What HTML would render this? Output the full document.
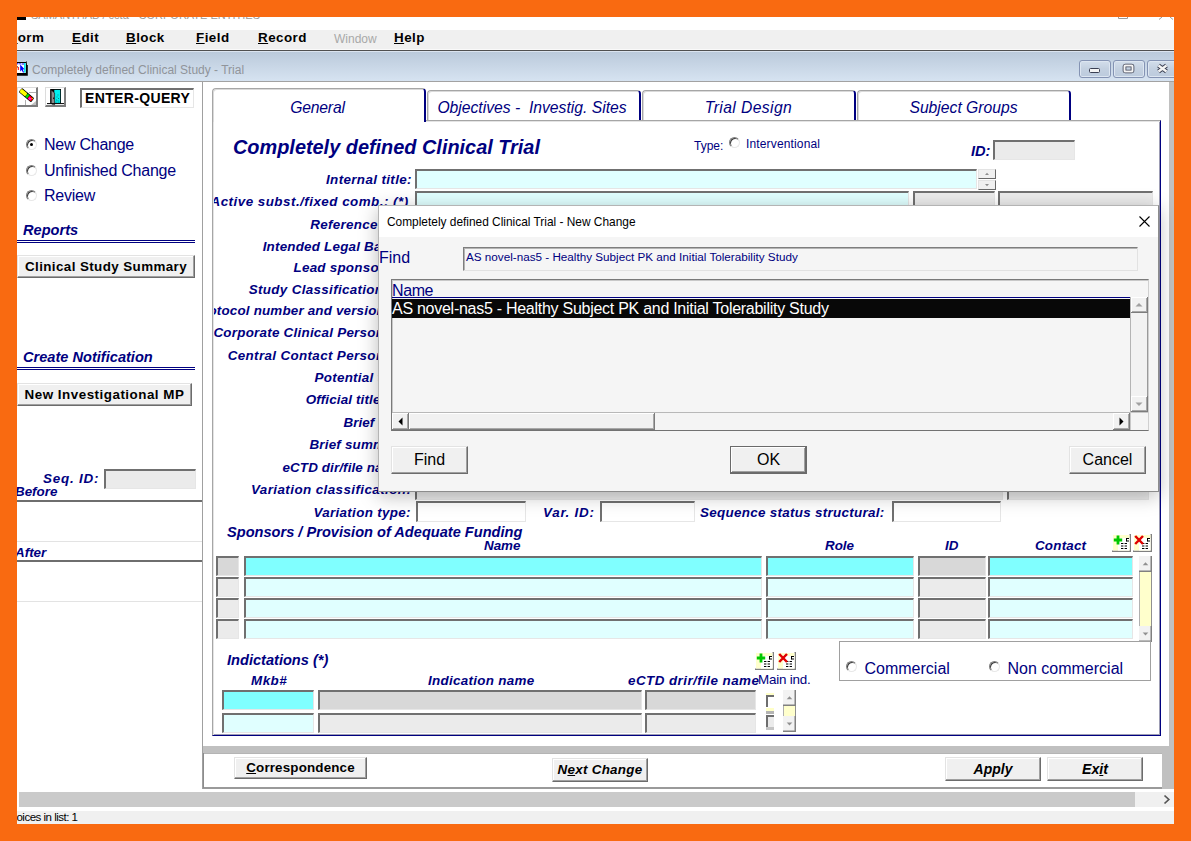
<!DOCTYPE html>
<html><head><meta charset="utf-8"><title>Completely defined Clinical Study - Trial</title>
<style>
*{box-sizing:border-box;margin:0;padding:0}
html,body{width:1191px;height:841px;overflow:hidden;background:#f96a11;font-family:"Liberation Sans",sans-serif}
#win{position:absolute;left:0;top:0;width:1191px;height:841px;background:#fff;overflow:hidden}
.fr{position:absolute;background:#f96a11;z-index:50}
.a{position:absolute;white-space:nowrap}
.nv{color:#000080}
.bi{font-weight:bold;font-style:italic;color:#000080;font-size:13.4px;line-height:16px}
.lbl{position:absolute;white-space:nowrap;font-weight:bold;font-style:italic;color:#000080;font-size:13.4px;text-align:right;line-height:16px;letter-spacing:.15px}
.f{position:absolute;border-style:solid;border-width:2px 1px 1px 2px;border-color:#707070 #e6e6e6 #e6e6e6 #707070}
.cy{background:#e0ffff}.cy1{background:#80ffff}.g{background:#ebebeb}.g1{background:#d8d8d8}.w{background:#fff}
.btn{position:absolute;background:#f0f0f0;border-style:solid;border-width:1px;border-color:#e3e3e3 #6c6c6c #6c6c6c #e3e3e3;box-shadow:inset -1px -1px 0 #a0a0a0,inset 1px 1px 0 #fff;text-align:center;white-space:nowrap;color:#000}
.u{text-decoration:underline}
.mn{font-weight:bold;font-size:13.4px;letter-spacing:.45px;line-height:16px;color:#000}
.rad{position:absolute;width:11px;height:11px;border-radius:50%;background:#fff;border:1px solid;border-color:#808080 #e8e8e8 #e8e8e8 #808080;box-shadow:inset 1px 1px 0 #404040}
.rad.on:after{content:"";position:absolute;left:3px;top:3px;width:3px;height:3px;border-radius:50%;background:#000}
.rl{position:absolute;white-space:nowrap;color:#000080;font-size:16px;line-height:20px;letter-spacing:-.25px}
.tab{position:absolute;background:#fff;border-style:solid;border-color:#a6a6a6 #000080 #a6a6a6 #a6a6a6;border-width:1px 2px 0 1px;box-shadow:inset 1px 1px 0 #dadada;border-radius:4px 4px 0 0;text-align:center;font-style:italic;color:#000080;font-size:15.7px}
</style></head><body>
<div id="win">
<div class="a" style="left:17px;top:17px;width:1157px;height:13px;background:#fff;overflow:hidden"><div class="a" style="left:14px;top:-8px;font-size:11px;color:#9a9a9a">SAMANTHAB / ccta - CORPORATE ENTITIES</div><div class="a" style="left:0;top:0;width:9px;height:3px;background:#000"></div></div>
<div class="a" style="left:17px;top:30px;width:1157px;height:20px;background:#f0f0f0;"></div>
<div class="a" style="left:17px;top:49px;width:1157px;height:1px;background:#fafafa;"></div>
<div class="a" style="left:17px;top:50px;width:1157px;height:1px;background:#505050;"></div>
<div class="a mn" style="left:9px;top:30px;"><span class="u">F</span>orm</div>
<div class="a mn" style="left:72px;top:30px;"><span class="u">E</span>dit</div>
<div class="a mn" style="left:126px;top:30px;"><span class="u">B</span>lock</div>
<div class="a mn" style="left:196px;top:30px;"><span class="u">F</span>ield</div>
<div class="a mn" style="left:258px;top:30px;"><span class="u">R</span>ecord</div>
<div class="a mn" style="left:394px;top:30px;"><span class="u">H</span>elp</div>
<div class="a " style="left:334px;top:31px;font-size:12px;color:#a8a8a8;line-height:16px">Window</div>
<div class="a" style="left:17px;top:51px;width:1157px;height:30px;background:linear-gradient(#dbe4ef 0,#dbe4ef 1px,#bbcadb 1px,#d6e3f1 100%);"></div>
<div class="a" style="left:17px;top:81px;width:1157px;height:1px;background:#a2a2a2;"></div>
<div class="a " style="left:32px;top:62px;font-size:12px;color:#90949a;line-height:16px">Completely defined Clinical Study - Trial</div>
<div class="a" style="left:1079px;top:60px;width:32px;height:18px;background:linear-gradient(#d3deeb,#c3d0e0 50%,#bccbdd);border:1px solid #8493b3;border-radius:3px;box-shadow:inset 0 0 0 1px #dde6f1"></div>
<div class="a" style="left:1113px;top:60px;width:32px;height:18px;background:linear-gradient(#d3deeb,#c3d0e0 50%,#bccbdd);border:1px solid #8493b3;border-radius:3px;box-shadow:inset 0 0 0 1px #dde6f1"></div>
<div class="a" style="left:1147px;top:60px;width:33px;height:18px;background:linear-gradient(#d3deeb,#c3d0e0 50%,#bccbdd);border:1px solid #8493b3;border-radius:3px;box-shadow:inset 0 0 0 1px #dde6f1"></div>
<svg class="a" style="left:1079px;top:60px" width="95" height="18" viewBox="0 0 95 18"><rect x="10.5" y="8.5" width="10" height="4" rx="1" fill="#f4f4f4" stroke="#3a3f52"/><rect x="45.5" y="5.5" width="8" height="6" rx="1" fill="none" stroke="#3a3f52" stroke-width="3.6"/><rect x="45.5" y="5.5" width="8" height="6" rx="0.5" fill="none" stroke="#f4f4f4" stroke-width="2"/><path d="M79.5 5.5 L87.5 11.5 M87.5 5.5 L79.5 11.5" stroke="#3a3f52" stroke-width="4.4" fill="none"/><path d="M79.5 5.5 L87.5 11.5 M87.5 5.5 L79.5 11.5" stroke="#f4f4f4" stroke-width="2.4" fill="none"/></svg>
<svg class="a" style="left:17px;top:61px" width="12" height="16" viewBox="0 0 12 16"><path d="M0 0.9 H8.8 L9.6 0 L10 4 H10.8 V14.8 H0 Z" fill="#000"/><rect x="0" y="2" width="8.8" height="10" fill="#fff"/><rect x="7" y="2" width="1.6" height="9.6" fill="#00f0f0"/><path d="M0 2.8 h1.4 M2.2 2.8 h1.6 M4.6 3 h2.4" stroke="#0000ff" stroke-width="1"/><path d="M3.2 3.6 L3.2 10.4 L4.7 9 L6 11.8 L7 11.2 L5.8 8.6 L7.6 8.3 Z" fill="#0000ff"/><rect x="0.8" y="6" width="1" height="3" fill="#ff0000"/><rect x="0" y="5.4" width="0.9" height="1" fill="#000"/></svg>
<svg class="a" style="left:1110px;top:17px" width="64" height="6" viewBox="0 0 64 6"><path d="M8.5 0 V1.5 H17.5 V0" fill="none" stroke="#9a9a9a"/><path d="M49 2.5 L52 0 M60 0 L63 2.5" stroke="#9a9a9a" fill="none"/></svg>
<div class="a" style="left:202px;top:82px;width:1px;height:707px;background:#a0a0a0;"></div>
<div class="a" style="left:17px;top:87px;width:21px;height:20px;background:#fff;border-style:solid;border-color:#dcdcdc #7c7c7c #7c7c7c #dcdcdc;border-width:1px 2px 2px 1px"></div>
<div class="a" style="left:45px;top:87px;width:21px;height:20px;background:#fff;border-style:solid;border-color:#dcdcdc #7c7c7c #7c7c7c #dcdcdc;border-width:1px 2px 2px 1px"></div>
<svg class="a" style="left:17px;top:86px" width="21" height="21" viewBox="0 0 21 21"><path d="M12 6.5 H19 M8.5 14 V19" stroke="#b0b0b0" fill="none"/><path d="M19 15 V19 H14 Z" fill="#c0c0c0"/><g transform="translate(4.6,5) rotate(40)"><rect x="-1.6" y="-2.7" width="16" height="5.4" rx="1.2" fill="#000"/><rect x="-1.4" y="-1.9" width="7.6" height="3.9" rx="1.2" fill="#ffff00"/><rect x="6.4" y="-1.9" width="2.6" height="3.9" fill="#00e000"/><rect x="9.2" y="-1.9" width="4.6" height="3.9" rx="0.8" fill="#ff0000"/><rect x="10" y="-0.4" width="2.4" height="2.2" fill="#ff00ff"/><rect x="12.4" y="-1.6" width="1" height="1.2" fill="#ffff00"/></g></svg>
<svg class="a" style="left:45px;top:86px" width="21" height="21" viewBox="0 0 21 21"><rect x="5.2" y="3" width="10.8" height="14.5" fill="#000"/><rect x="9.3" y="3.9" width="5.9" height="13" fill="#00f0f0"/><path d="M6.2 4 L9.6 7 V19 L7.3 18.4 L6.2 17.5 Z" fill="#8c8c8c" stroke="#000" stroke-width=".5"/><path d="M2 17.6 H19" stroke="#000" stroke-width="1"/><path d="M12.5 9 h1 M11.5 11 h1 M13 12.5 h1 M11 14 h1 M12.5 14.8 h1 M10.5 16 h1 M13.3 16 h1" stroke="#008c8c" stroke-width="1"/><rect x="8.2" y="11.5" width="1" height="1.6" fill="#000"/></svg>
<div class="f w" style="left:80px;top:88px;width:114px;height:20px;font-weight:bold;font-size:14px;line-height:16px;letter-spacing:.35px;color:#000;padding-left:3px">ENTER-QUERY</div>
<div class="rad on" style="left:26px;top:139px"></div>
<div class="rl" style="left:44px;top:135px">New Change</div>
<div class="rad" style="left:26px;top:165px"></div>
<div class="rl" style="left:44px;top:161px">Unfinished Change</div>
<div class="rad" style="left:26px;top:190px"></div>
<div class="rl" style="left:44px;top:186px">Review</div>
<div class="a bi" style="left:23px;top:222px;font-size:14.6px">Reports</div>
<div class="a" style="left:17px;top:240px;width:178px;height:1px;background:#000080;"></div>
<div class="a" style="left:17px;top:242px;width:178px;height:1px;background:#000080;"></div>
<div class="btn" style="left:17px;top:255px;width:178px;height:23px;line-height:21px;font-weight:bold;font-size:13.4px;letter-spacing:.4px">Clinical Study Summary</div>
<div class="a bi" style="left:23px;top:349px;font-size:14.6px">Create Notification</div>
<div class="a" style="left:17px;top:367px;width:178px;height:1px;background:#000080;"></div>
<div class="a" style="left:17px;top:369px;width:178px;height:1px;background:#000080;"></div>
<div class="btn" style="left:17px;top:383px;width:175px;height:23px;line-height:21px;font-weight:bold;font-size:13.4px;letter-spacing:.5px">New Investigational MP</div>
<div class="a bi" style="left:43px;top:471px;letter-spacing:.8px">Seq. ID:</div>
<div class="f g" style="left:104px;top:469px;width:92px;height:20px"></div>
<div class="a bi" style="left:15px;top:484px;">Before</div>
<div class="a" style="left:17px;top:500px;width:185px;height:2px;background:#6e6e6e;"></div>
<div class="a" style="left:17px;top:541px;width:185px;height:1px;background:#e3e3e3;"></div>
<div class="a bi" style="left:15px;top:545px;">After</div>
<div class="a" style="left:17px;top:560px;width:185px;height:2px;background:#6e6e6e;"></div>
<div class="a" style="left:17px;top:601px;width:185px;height:1px;background:#e3e3e3;"></div>
<div class="a" style="left:212px;top:120px;width:949px;height:616px;border-style:solid;border-width:1px;border-color:#a6a6a6 #000080 #000080 #a6a6a6;box-shadow:inset 1px 1px 0 #e4e4e4,inset -1px -1px 0 #9c9cb4;background:#fff"></div>
<div class="tab" style="left:427px;top:90px;width:214px;height:30px;line-height:33px;padding-right:3px">Objectives -&nbsp; Investig. Sites</div>
<div class="tab" style="left:642px;top:90px;width:214px;height:30px;line-height:33px;letter-spacing:.4px">Trial Design</div>
<div class="tab" style="left:857px;top:90px;width:214px;height:30px;line-height:33px;">Subject Groups</div>
<div class="tab" style="left:212px;top:88px;width:214px;height:34px;line-height:38px;letter-spacing:-.2px;padding-right:2px">General</div>
<div class="a bi" style="left:233px;top:135.20000000000002px;font-size:19.9px;line-height:24px">Completely defined Clinical Trial</div>
<div class="a nv" style="left:694px;top:138px;font-size:12px;line-height:16px">Type:</div>
<div class="rad" style="left:729px;top:137px"></div>
<div class="a nv" style="left:746px;top:136px;font-size:12px;line-height:16px;letter-spacing:.15px">Interventional</div>
<div class="a bi" style="left:971px;top:142.8px;font-size:14.6px">ID:</div>
<div class="f g" style="left:993px;top:140px;width:82px;height:20px"></div>
<div class="a" style="left:214px;top:160px;width:200px;height:370px;overflow:hidden">
<div class="lbl" style="left:112px;top:12px;letter-spacing:0.37px">Internal title:</div>
<div class="lbl" style="left:-3.5px;top:34px;letter-spacing:0.48px">Active subst./fixed comb.: (*)</div>
<div class="lbl" style="left:96.30000000000001px;top:57px;letter-spacing:0.3px">Reference no.:</div>
<div class="lbl" style="left:48.69999999999999px;top:79px;letter-spacing:0.21px">Intended Legal Basis:</div>
<div class="lbl" style="left:79.5px;top:100px;letter-spacing:0.25px">Lead sponsor:</div>
<div class="lbl" style="left:34.80000000000001px;top:122px;letter-spacing:0.33px">Study Classification:</div>
<div class="lbl" style="left:-20px;top:143px;letter-spacing:0.18px">Protocol number and version:</div>
<div class="lbl" style="left:-0.5999999999999943px;top:165px;letter-spacing:0.25px">Corporate Clinical Person:</div>
<div class="lbl" style="left:13.699999999999989px;top:188px;letter-spacing:0.36px">Central Contact Person:</div>
<div class="lbl" style="left:100.5px;top:210px;letter-spacing:0.28px">Potential title:</div>
<div class="lbl" style="left:91.80000000000001px;top:232px;letter-spacing:0.15px">Official title:</div>
<div class="lbl" style="left:129.5px;top:255px;letter-spacing:0.02px">Brief title:</div>
<div class="lbl" style="left:95.5px;top:277px;letter-spacing:0.2px">Brief summary:</div>
<div class="lbl" style="left:68.5px;top:300px;letter-spacing:0.12px">eCTD dir/file name:</div>
<div class="lbl" style="left:37px;top:322px;letter-spacing:0.42px">Variation classification:</div>
<div class="lbl" style="left:99.39999999999998px;top:345px;letter-spacing:0.33px">Variation type:</div>
</div>
<div class="f cy" style="left:415px;top:169px;width:562px;height:20px"></div>
<div class="a" style="left:978px;top:169px;width:18px;height:10px;background:#f0f0f0;border:1px solid;border-color:#e3e3e3 #696969 #696969 #e3e3e3"></div>
<div class="a" style="left:978px;top:180px;width:18px;height:10px;background:#f0f0f0;border:1px solid;border-color:#e3e3e3 #696969 #696969 #e3e3e3"></div>
<svg class="a" style="left:978px;top:169px" width="18" height="21" viewBox="0 0 18 21"><path d="M7 6 L9 3.8 L11 6 Z M7 15 L9 17.2 L11 15 Z" fill="#909090"/></svg>
<div class="f cy" style="left:415px;top:191px;width:494px;height:20px"></div>
<div class="f g" style="left:913px;top:191px;width:82px;height:20px"></div>
<div class="f g" style="left:998px;top:191px;width:155px;height:20px"></div>
<div class="f g" style="left:415px;top:480px;width:588px;height:20px"></div>
<div class="f g" style="left:1007px;top:480px;width:142px;height:20px"></div>
<div class="f w" style="left:416px;top:501px;width:110px;height:21px"></div>
<div class="a bi" style="left:543px;top:504.8px;letter-spacing:.75px">Var. ID:</div>
<div class="f w" style="left:600px;top:501px;width:95px;height:21px"></div>
<div class="a bi" style="left:700px;top:504.8px;letter-spacing:.3px">Sequence status structural:</div>
<div class="f w" style="left:892px;top:501px;width:109px;height:21px"></div>
<div class="a bi" style="left:227px;top:523.8px;font-size:14.6px">Sponsors / Provision of Adequate Funding</div>
<div class="a bi" style="left:484px;top:537.8px;">Name</div>
<div class="a bi" style="left:825px;top:537.8px;">Role</div>
<div class="a bi" style="left:945px;top:537.8px;">ID</div>
<div class="a bi" style="left:1035px;top:537.8px;letter-spacing:.2px">Contact</div>
<div class="f g1" style="left:216px;top:556px;width:23px;height:20px"></div>
<div class="f cy1" style="left:244px;top:556px;width:518px;height:20px"></div>
<div class="f cy1" style="left:766px;top:556px;width:148px;height:20px"></div>
<div class="f g1" style="left:918px;top:556px;width:68px;height:20px"></div>
<div class="f cy1" style="left:988px;top:556px;width:145px;height:20px"></div>
<div class="f g" style="left:216px;top:577px;width:23px;height:20px"></div>
<div class="f cy" style="left:244px;top:577px;width:518px;height:20px"></div>
<div class="f cy" style="left:766px;top:577px;width:148px;height:20px"></div>
<div class="f g" style="left:918px;top:577px;width:68px;height:20px"></div>
<div class="f cy" style="left:988px;top:577px;width:145px;height:20px"></div>
<div class="f g" style="left:216px;top:598px;width:23px;height:20px"></div>
<div class="f cy" style="left:244px;top:598px;width:518px;height:20px"></div>
<div class="f cy" style="left:766px;top:598px;width:148px;height:20px"></div>
<div class="f g" style="left:918px;top:598px;width:68px;height:20px"></div>
<div class="f cy" style="left:988px;top:598px;width:145px;height:20px"></div>
<div class="f g" style="left:216px;top:619px;width:23px;height:20px"></div>
<div class="f cy" style="left:244px;top:619px;width:518px;height:20px"></div>
<div class="f cy" style="left:766px;top:619px;width:148px;height:20px"></div>
<div class="f g" style="left:918px;top:619px;width:68px;height:20px"></div>
<div class="f cy" style="left:988px;top:619px;width:145px;height:20px"></div>
<div class="a" style="left:1139px;top:556px;width:13px;height:86px;background:#ffffcc;border-left:1px solid #b0b0b0;border-right:1px solid #909090"></div>
<svg class="a" style="left:1139px;top:556px" width="13" height="16" viewBox="0 0 13 16"><rect width="13" height="16" fill="#808080"/><rect width="11.5" height="14.5" fill="#f2f2f2"/><path d="M3.2 7.8 L6 4.8 L8.8 7.8 Z" fill="#909090" transform="translate(0.5,1.5)"/></svg>
<svg class="a" style="left:1139px;top:626px" width="13" height="16" viewBox="0 0 13 16"><rect width="13" height="16" fill="#808080"/><rect width="11.5" height="14.5" fill="#f2f2f2"/><path d="M3.2 5 L6 8 L8.8 5 Z" fill="#909090" transform="translate(0.5,1.5)"/></svg>
<svg class="a" style="left:1112px;top:534px" width="19" height="18" viewBox="0 0 19 18"><rect x="0" y="0" width="19" height="18" fill="#808080"/><rect x="0" y="0" width="17.5" height="16.5" fill="#fff"/><rect x="1" y="1" width="16.5" height="15.5" fill="#ffffcc"/><rect x="6" y="4" width="11.5" height="12.5" fill="#fff"/><path d="M9 9.5 H16 M9 12 H16 M9 14.5 H16" stroke="#000" stroke-width="1.2" stroke-dasharray="2.4 1.2" fill="none"/><path d="M14.5 4 V7.5 M14.5 4.5 H17 M14.5 7 H17" stroke="#000" stroke-width="1" fill="none"/><path d="M6 1.5 V10.5 M1.8 6 H10.2" stroke="#00c800" stroke-width="2.8" fill="none"/></svg>
<svg class="a" style="left:1133px;top:534px" width="19" height="18" viewBox="0 0 19 18"><rect x="0" y="0" width="19" height="18" fill="#808080"/><rect x="0" y="0" width="17.5" height="16.5" fill="#fff"/><rect x="1" y="1" width="16.5" height="15.5" fill="#ffffcc"/><rect x="6" y="4" width="11.5" height="12.5" fill="#fff"/><path d="M9 9.5 H16 M9 12 H16 M9 14.5 H16" stroke="#000" stroke-width="1.2" stroke-dasharray="2.4 1.2" fill="none"/><path d="M14.5 4 V7.5 M14.5 4.5 H17 M14.5 7 H17" stroke="#000" stroke-width="1" fill="none"/><path d="M2.2 2 L10 10 M10 2 L2.2 10" stroke="#e00000" stroke-width="2.5" fill="none"/></svg>
<svg class="a" style="left:755px;top:652px" width="19" height="18" viewBox="0 0 19 18"><rect x="0" y="0" width="19" height="18" fill="#808080"/><rect x="0" y="0" width="17.5" height="16.5" fill="#fff"/><rect x="1" y="1" width="16.5" height="15.5" fill="#ffffcc"/><rect x="6" y="4" width="11.5" height="12.5" fill="#fff"/><path d="M9 9.5 H16 M9 12 H16 M9 14.5 H16" stroke="#000" stroke-width="1.2" stroke-dasharray="2.4 1.2" fill="none"/><path d="M14.5 4 V7.5 M14.5 4.5 H17 M14.5 7 H17" stroke="#000" stroke-width="1" fill="none"/><path d="M6 1.5 V10.5 M1.8 6 H10.2" stroke="#00c800" stroke-width="2.8" fill="none"/></svg>
<svg class="a" style="left:777px;top:652px" width="19" height="18" viewBox="0 0 19 18"><rect x="0" y="0" width="19" height="18" fill="#808080"/><rect x="0" y="0" width="17.5" height="16.5" fill="#fff"/><rect x="1" y="1" width="16.5" height="15.5" fill="#ffffcc"/><rect x="6" y="4" width="11.5" height="12.5" fill="#fff"/><path d="M9 9.5 H16 M9 12 H16 M9 14.5 H16" stroke="#000" stroke-width="1.2" stroke-dasharray="2.4 1.2" fill="none"/><path d="M14.5 4 V7.5 M14.5 4.5 H17 M14.5 7 H17" stroke="#000" stroke-width="1" fill="none"/><path d="M2.2 2 L10 10 M10 2 L2.2 10" stroke="#e00000" stroke-width="2.5" fill="none"/></svg>
<div class="a bi" style="left:227px;top:651.8px;font-size:14.6px">Indictations (*)</div>
<div class="a bi" style="left:251px;top:672.8px;letter-spacing:.5px">Mkb#</div>
<div class="a bi" style="left:428px;top:672.8px;letter-spacing:.3px">Indication name</div>
<div class="a bi" style="left:628px;top:672.8px;letter-spacing:.45px">eCTD drir/file name</div>
<div class="a nv" style="left:758px;top:672px;font-size:13.4px;line-height:16px;letter-spacing:-.2px">Main ind.</div>
<div class="f cy1" style="left:222px;top:690px;width:92px;height:20px"></div>
<div class="f g1" style="left:318px;top:690px;width:324px;height:20px"></div>
<div class="f g1" style="left:645px;top:690px;width:111px;height:20px"></div>
<div class="f cy" style="left:222px;top:712.5px;width:92px;height:20.0px"></div>
<div class="f g" style="left:318px;top:712.5px;width:324px;height:20.0px"></div>
<div class="f g" style="left:645px;top:712.5px;width:111px;height:20.0px"></div>
<div class="a" style="left:839px;top:641px;width:312px;height:40px;border:1px solid #a0a0a0;background:#fff"></div>
<div class="rad" style="left:846px;top:661px"></div>
<div class="rl" style="left:864.5px;top:659px;letter-spacing:0">Commercial</div>
<div class="rad" style="left:989px;top:661px"></div>
<div class="rl" style="left:1007.5px;top:659px;letter-spacing:0">Non commercial</div>
<div class="a" style="left:766px;top:693px;width:8px;height:2px;background:#ffffc8;"></div>
<div class="a" style="left:766px;top:695px;width:8px;height:12px;background:#fff;border-style:solid;border-width:2px 0 0 2px;border-color:#6e6e6e"></div>
<div class="a" style="left:766px;top:708px;width:8px;height:3px;background:#ffffc8;"></div>
<div class="a" style="left:766px;top:711px;width:8px;height:3px;background:#b4b4b4;"></div>
<div class="a" style="left:766px;top:714.5px;width:8px;height:12px;background:#ebebeb;border-style:solid;border-width:2px 0 0 2px;border-color:#6e6e6e"></div>
<div class="a" style="left:766px;top:727px;width:8px;height:3px;background:#c4c4c4;"></div>
<div class="a" style="left:783px;top:690px;width:13px;height:42px;background:#ffffcc;border-left:1px solid #b0b0b0;border-right:1px solid #909090"></div>
<svg class="a" style="left:783px;top:690px" width="13" height="16" viewBox="0 0 13 16"><rect width="13" height="16" fill="#808080"/><rect width="11.5" height="14.5" fill="#f2f2f2"/><path d="M3.2 7.8 L6 4.8 L8.8 7.8 Z" fill="#909090" transform="translate(0.5,1.5)"/></svg>
<svg class="a" style="left:783px;top:716px" width="13" height="16" viewBox="0 0 13 16"><rect width="13" height="16" fill="#808080"/><rect width="11.5" height="14.5" fill="#f2f2f2"/><path d="M3.2 5 L6 8 L8.8 5 Z" fill="#909090" transform="translate(0.5,1.5)"/></svg>
<div class="a" style="left:203px;top:746px;width:966px;height:7px;background:#c0c0c0;"></div>
<div class="a" style="left:1169px;top:82px;width:5px;height:710px;background:#c0c0c0;"></div>
<div class="a" style="left:1162px;top:753px;width:12px;height:39px;background:#c0c0c0;"></div>
<div class="a" style="left:203px;top:787px;width:959px;height:2px;background:#9a9a9a;"></div>
<div class="a" style="left:203px;top:753px;width:959px;height:1px;background:#b4b4b4;"></div>
<div class="a" style="left:203px;top:790px;width:959px;height:1px;background:#e4e4e4;"></div>
<div class="a" style="left:203px;top:753px;width:1px;height:35px;background:#8c8c8c;"></div>
<div class="btn" style="left:234px;top:757px;width:133px;height:22px;line-height:20px;font-weight:bold;font-size:13.4px;letter-spacing:.15px"><span class="u">C</span>orrespondence</div>
<div class="btn" style="left:552px;top:758px;width:96px;height:24px;line-height:22px;font-weight:bold;font-style:italic;font-size:13.4px;letter-spacing:.3px">N<span class="u">e</span>xt Change</div>
<div class="btn" style="left:945px;top:757px;width:96px;height:24px;line-height:22px;font-weight:bold;font-style:italic;font-size:14px">Apply</div>
<div class="btn" style="left:1047px;top:757px;width:96px;height:24px;line-height:22px;font-weight:bold;font-style:italic;font-size:14.2px">Ex<span class="u">i</span>t</div>
<div class="a" style="left:17px;top:789px;width:1157px;height:22px;background:#fff;"></div>
<div class="a" style="left:1135px;top:792px;width:39px;height:15px;background:#f0f0f0;"></div>
<div class="a" style="left:19px;top:792px;width:1116px;height:15px;background:#cacaca;"></div>
<svg class="a" style="left:1163px;top:794px" width="8" height="11" viewBox="0 0 8 11"><path d="M1.5 1.5 L5.8 5.5 L1.5 9.5" stroke="#555" stroke-width="1.7" fill="none"/></svg>
<div class="a" style="left:17px;top:811px;width:1157px;height:13px;background:#f0f0f0;"></div>
<div class="a" style="left:17px;top:809px;width:200px;height:15px;overflow:hidden"><div class="a" id="stat" style="right:139.5px;top:1px;font-size:11.5px;line-height:14px;color:#000;letter-spacing:-.5px">Choices in list: 1</div></div>
<div class="a" style="left:378px;top:205px;width:781px;height:287px;background:#f5f5f5;border:1px solid;border-color:#b4b4b4 #8c8c8c #8c8c8c #b4b4b4;box-shadow:0 4px 18px rgba(0,0,0,.27);z-index:10">
<div class="a" style="left:0px;top:0px;width:779px;height:31px;background:#fff;"></div>
<div class="a" style="left:8px;top:8px;font-size:11.9px;line-height:16px;color:#000">Completely defined Clinical Trial - New Change</div>
<svg class="a" style="left:760px;top:10px" width="11" height="11" viewBox="0 0 11 11"><path d="M0.5 0.5 L10.5 10.5 M10.5 0.5 L0.5 10.5" stroke="#000" stroke-width="1.1" fill="none"/></svg>
<div class="a" style="left:0px;top:42px;font-size:16px;line-height:20px;color:#000080">Find</div>
<div class="a" style="left:84px;top:41px;width:675px;height:24px;background:#f5f5f5;border:1px solid;border-color:#7e7e7e #e2e2e2 #e2e2e2 #7e7e7e;box-shadow:inset 1px 1px 0 #b4b4b4;font-size:11.7px;line-height:17px;color:#000080;padding-left:2px;white-space:nowrap">AS novel-nas5 - Healthy Subject PK and Initial Tolerability Study</div>
<div class="a" style="left:12px;top:73px;width:758px;height:152px;background:#f5f5f5;border-style:solid;border-width:1px;border-color:#7a7a7a #d0d0d0 #727272 #7a7a7a;box-shadow:inset 1px 1px 0 #c8c8c8,inset 0 -1px 0 #a8a8a8"></div>
<div class="a" style="left:13px;top:76px;font-size:16px;line-height:18px;color:#000080;letter-spacing:-.4px">Name</div>
<div class="a" style="left:13px;top:91px;width:738px;height:1px;background:#000080;"></div>
<div class="a" style="left:13px;top:93px;width:738px;height:19px;background:#080808;"></div>
<div class="a" style="left:13px;top:94px;font-size:16px;line-height:18px;color:#fff;letter-spacing:-.27px">AS novel-nas5 - Healthy Subject PK and Initial Tolerability Study</div>
<div class="a" style="left:751px;top:91px;width:18px;height:115px;background:#f2f2f2;border-left:1px solid #b4b4b4;border-right:1px solid #9a9a9a"></div>
<svg class="a" style="left:752px;top:91px" width="17" height="16" viewBox="0 0 17 16"><rect width="17" height="16" fill="#7c7c7c"/><rect width="16" height="15" fill="#fff"/><rect x="1" y="1" width="15" height="14" fill="#a8a8a8"/><rect x="1" y="1" width="14" height="13" fill="#f1f1f1"/><path d="M4.5 9.5 L8 6 L11.5 9.5 Z" fill="#a0a0a0"/></svg>
<svg class="a" style="left:752px;top:190px" width="17" height="16" viewBox="0 0 17 16"><rect width="17" height="16" fill="#7c7c7c"/><rect width="16" height="15" fill="#fff"/><rect x="1" y="1" width="15" height="14" fill="#a8a8a8"/><rect x="1" y="1" width="14" height="13" fill="#f1f1f1"/><path d="M4.5 6.5 L8 10 L11.5 6.5 Z" fill="#a0a0a0"/></svg>
<div class="a" style="left:13px;top:206px;width:738px;height:18px;background:#f4f4f4;border-top:1px solid #b8b8b8"></div>
<svg class="a" style="left:13px;top:207px" width="17" height="17" viewBox="0 0 17 17"><rect width="17" height="17" fill="#7c7c7c"/><rect width="16" height="16" fill="#fff"/><rect x="1" y="1" width="15" height="15" fill="#a8a8a8"/><rect x="1" y="1" width="14" height="14" fill="#f1f1f1"/><path d="M10.5 4.5 L6.5 8.5 L10.5 12.5 Z" fill="#000"/></svg>
<svg class="a" style="left:30px;top:207px" width="246" height="17" viewBox="0 0 246 17"><rect width="246" height="17" fill="#7c7c7c"/><rect width="245" height="16" fill="#fff"/><rect x="1" y="1" width="244" height="15" fill="#a8a8a8"/><rect x="1" y="1" width="243" height="14" fill="#f1f1f1"/><path d="" fill="#000"/></svg>
<svg class="a" style="left:734px;top:207px" width="17" height="17" viewBox="0 0 17 17"><rect width="17" height="17" fill="#7c7c7c"/><rect width="16" height="16" fill="#fff"/><rect x="1" y="1" width="15" height="15" fill="#a8a8a8"/><rect x="1" y="1" width="14" height="14" fill="#f1f1f1"/><path d="M6.5 4.5 L10.5 8.5 L6.5 12.5 Z" fill="#000"/></svg>
<div class="a" style="left:751px;top:206px;width:18px;height:18px;background:#f5f5f5;border-left:1px solid #c8c8c8;border-top:1px solid #c8c8c8"></div>
<div class="btn" style="left:12px;top:240px;width:77px;height:28px;line-height:25px;font-size:16px;">Find</div>
<div class="btn" style="left:351px;top:240px;width:77px;height:28px;line-height:25px;font-size:16px;border-color:#6a6a6a;box-shadow:inset -1px -1px 0 #6c6c6c,inset 1px 1px 0 #fff,inset -2px -2px 0 #a0a0a0;">OK</div>
<div class="btn" style="left:690px;top:240px;width:77px;height:28px;line-height:25px;font-size:16px;">Cancel</div>
</div>
<div class="fr" style="left:0;top:0;width:1191px;height:17px"></div><div class="fr" style="left:0;top:0;width:17px;height:841px"></div><div class="fr" style="left:1174px;top:0;width:17px;height:841px"></div><div class="fr" style="left:0;top:824px;width:1191px;height:17px"></div>
</div>
</body></html>
